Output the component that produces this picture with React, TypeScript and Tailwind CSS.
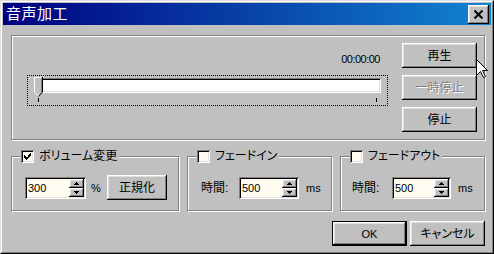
import React from "react";

const raised =
  "shadow-[inset_-1px_-1px_0_#000,inset_1px_1px_0_#fff,inset_-2px_-2px_0_#808080,inset_2px_2px_0_#dfdfdf]";
const sunken =
  "shadow-[inset_1px_1px_0_#808080,inset_-1px_-1px_0_#fff,inset_2px_2px_0_#000,inset_-2px_-2px_0_#dfdfdf]";
const etched = "border border-[#808080] shadow-[inset_1px_1px_0_#fff,1px_1px_0_#fff]";

function Button({
  children,
  className = "",
  disabled = false,
}: {
  children: React.ReactNode;
  className?: string;
  disabled?: boolean;
}) {
  return (
    <div
      className={`${className} h-[25px] bg-[#c0c0c0] ${raised} flex items-center justify-center text-[12px] leading-[14px] ${
        disabled ? "text-[#808080] [text-shadow:1px_1px_0_#fff]" : "text-black"
      }`}
    >
      {children}
    </div>
  );
}

function Checkbox({ checked }: { checked: boolean }) {
  return (
    <div className={`w-[13px] h-[13px] bg-[#fffbf0] ${sunken} relative shrink-0`}>
      {checked && (
        <svg width="13" height="13" viewBox="0 0 13 13" className="block" shapeRendering="crispEdges">
          <path
            d="M3 5h1v1H3z M3 6h2v1H3z M3 7h3v1H3z M4 8h3v1H4z M5 9h1v1H5z M6 7h1v1H6z M7 6h1v1H7z M8 5h1v1H8z M9 4h1v1H9z M6 8h1v1H6z M7 7h1v1H7z M8 6h1v1H8z M9 5h1v1H9z M7 5h1v1H7z M8 4h1v1H8z M9 3h1v1H9z"
            fill="#000"
          />
        </svg>
      )}
    </div>
  );
}

function SpinEdit({ value, className }: { value: string; className: string }) {
  return (
    <div className={`${className} h-[22px] bg-[#fffbf0] ${sunken} flex p-[2px] shrink-0`}>
      <div className="flex-1 pl-[1px] text-[11px] leading-[18px] text-black">{value}</div>
      <div className="w-[15px] flex flex-col">
        <div className={`flex-1 bg-[#c0c0c0] ${raised} flex items-center justify-center`}>
          <svg width="5" height="3" viewBox="0 0 5 3" shapeRendering="crispEdges" className="block">
            <path d="M2 0h1v1H2z M1 1h3v1H1z M0 2h5v1H0z" fill="#000" />
          </svg>
        </div>
        <div className={`flex-1 bg-[#c0c0c0] ${raised} flex items-center justify-center`}>
          <svg width="5" height="3" viewBox="0 0 5 3" shapeRendering="crispEdges" className="block">
            <path d="M0 0h5v1H0z M1 1h3v1H1z M2 2h1v1H2z" fill="#000" />
          </svg>
        </div>
      </div>
    </div>
  );
}

function Group({
  label,
  checked,
  className,
  children,
}: {
  label: string;
  checked: boolean;
  className: string;
  children: React.ReactNode;
}) {
  return (
    <fieldset className={`${className} ${etched} pb-[10px]`}>
      <legend className="ml-[9px] pr-[2px] bg-[#c0c0c0]">
        <span className="flex items-center h-[13px] gap-[5px]">
          <Checkbox checked={checked} />
          <span className="text-[12px] leading-[13px] text-black">{label}</span>
        </span>
      </legend>
      <div className="mt-[12px] h-[25px] flex items-center">{children}</div>
    </fieldset>
  );
}

export default function App() {
  return (
    <div className="relative w-[494px] h-[254px] bg-[#c0c0c0] border border-t-[#dfdfdf] border-l-[#dfdfdf] border-r-black border-b-black [font-family:'Liberation_Sans','Noto_Sans_CJK_JP',sans-serif] [font-feature-settings:'palt'] select-none">
      <div className="h-full border border-t-white border-l-white border-r-[#808080] border-b-[#808080] p-px flex flex-col">
        {/* Title bar */}
        <div className="h-[22px] shrink-0 flex items-center justify-between pl-[3px] pr-[2px] bg-[linear-gradient(to_right,#000080,#1084d0)]">
          <span className="text-white text-[15px] leading-[16px] tracking-[0.5px] [font-feature-settings:normal]">音声加工</span>
          <div className={`w-[21px] h-[19px] bg-[#c0c0c0] ${raised} flex items-center justify-center`}>
            <svg width="9" height="9" viewBox="0 0 9 9" className="block">
              <path d="M0.5 0.5 L8.5 8.5 M8.5 0.5 L0.5 8.5" stroke="#000" strokeWidth="2" />
            </svg>
          </div>
        </div>

        {/* Body */}
        <div className="flex-1 flex flex-col pl-[8px] pr-[6px] pt-[10px]">
          {/* Top frame */}
          <div className={`h-[105px] ${etched} flex`}>
            <div className="ml-[15px] w-[361px] flex flex-col">
              <div className="mt-[16px] h-[14px] pr-[8px] text-right text-[11px] leading-[14px] tracking-[-0.5px] text-black">
                00:00:00
              </div>
              <div className="mt-[9px] h-[31px] border border-dotted border-black relative">
                <div className="ml-[6px] mt-[2px] w-[347px] h-[15px] bg-white shadow-[inset_1px_1px_0_#808080,inset_-1px_-1px_0_#fff,inset_2px_2px_0_#000,inset_-2px_-2px_0_#dfdfdf]" />
                <div className="mx-[10px] mt-[5px] h-[4px] flex justify-between">
                  <div className="w-px h-[4px] bg-black" />
                  <div className="w-px h-[4px] bg-black" />
                </div>
                <svg
                  width="9"
                  height="20"
                  viewBox="0 0 9 20"
                  className="absolute left-[6px] top-[1px] block"
                >
                  <polygon points="0,0 9,0 9,15 4.5,19.5 0,15" fill="#c0c0c0" />
                  <rect x="0" y="0" width="1" height="15" fill="#fff" shapeRendering="crispEdges" />
                  <rect x="0" y="0" width="8" height="1" fill="#fff" shapeRendering="crispEdges" />
                  <rect x="7" y="1" width="1" height="14" fill="#808080" shapeRendering="crispEdges" />
                  <rect x="8" y="0" width="1" height="15" fill="#000" shapeRendering="crispEdges" />
                  <line x1="0.5" y1="15" x2="4.5" y2="19" stroke="#fff" strokeWidth="1" />
                  <line x1="8.5" y1="15" x2="4.5" y2="19.5" stroke="#000" strokeWidth="1" />
                </svg>
              </div>
            </div>
            <div className="ml-[14px] mt-[7px] flex flex-col gap-[7px]">
              <Button className="w-[75px]">再生</Button>
              <Button className="w-[75px]" disabled>
                一時停止
              </Button>
              <Button className="w-[75px]">停止</Button>
            </div>
          </div>

          {/* Groups */}
          <div className="mt-[10px] flex gap-[8px]">
            <Group label="ボリューム変更" checked className="w-[168px]">
              <div className="ml-[13px]" />
              <SpinEdit value="300" className="w-[61px]" />
              <span className="ml-[5px] w-[8px] text-[11px] leading-[14px] text-black">%</span>
              <Button className="ml-[8px] w-[60px]">正規化</Button>
            </Group>
            <Group label="フェードイン" checked={false} className="w-[145px]">
              <span className="ml-[13px] w-[30px] text-[12px] leading-[14px] text-black">時間:</span>
              <SpinEdit value="500" className="ml-[8px] w-[60px]" />
              <span className="ml-[7px] text-[11px] leading-[14px] text-black">ms</span>
            </Group>
            <Group label="フェードアウト" checked={false} className="w-[145px]">
              <span className="ml-[11px] w-[30px] text-[12px] leading-[14px] text-black">時間:</span>
              <SpinEdit value="500" className="ml-[10px] w-[59px]" />
              <span className="ml-[7px] text-[11px] leading-[14px] text-black">ms</span>
            </Group>
          </div>

          {/* OK / Cancel */}
          <div className="mt-[10px] flex justify-end gap-[3px]">
            <div className="w-[75px] h-[25px] border border-black">
              <div
                className={`w-full h-full bg-[#c0c0c0] ${raised} flex items-center justify-center text-[11px] leading-[14px] text-black`}
              >
                OK
              </div>
            </div>
            <Button className="w-[75px]">キャンセル</Button>
          </div>
        </div>
      </div>

      {/* Mouse cursor */}
      <svg width="12" height="20" viewBox="0 0 12 20" className="absolute left-[475px] top-[58px] block">
        <path
          d="M0.5 0.5 L0.5 16.5 L4.5 12.5 L7.5 18.5 L9.5 17.5 L6.5 11.5 L11.5 11.5 Z"
          fill="#fff"
          stroke="#000"
          strokeWidth="1"
          strokeLinejoin="miter"
        />
      </svg>
    </div>
  );
}
